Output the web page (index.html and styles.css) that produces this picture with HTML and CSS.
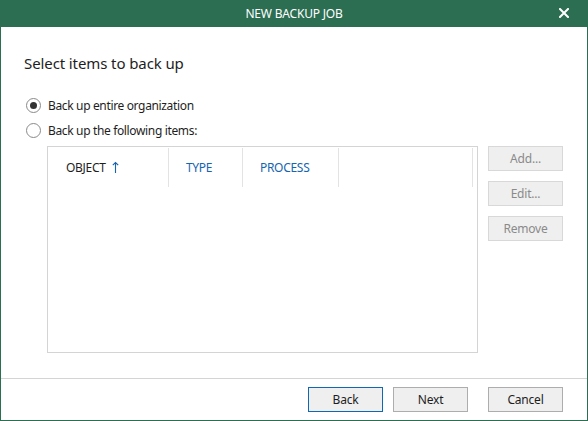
FILE: index.html
```html
<!DOCTYPE html>
<html>
<head>
<meta charset="utf-8">
<link rel="stylesheet" href="styles.css">
</head>
<body>
<div class="window">
  <div class="titlebar">
    <span class="title">NEW BACKUP JOB</span>
    <svg class="close" width="10" height="10" viewBox="0 0 10 10"><path d="M1 1L9 9M9 1L1 9" stroke="#fff" stroke-width="2" stroke-linecap="square"/></svg>
  </div>
  <div class="content">
    <h1 class="heading">Select items to back up</h1>
    <div class="radio-row">
      <span class="radio checked"></span><span class="radio-label">Back up entire organization</span>
    </div>
    <div class="radio-row">
      <span class="radio"></span><span class="radio-label">Back up the following items:</span>
    </div>
    <div class="items">
      <div class="table">
        <div class="thead">
          <div class="th col-object">OBJECT <svg class="sort" width="7" height="12" viewBox="0 0 7 12"><path d="M3.5 1.5V12M0.8 4.2L3.5 1.5L6.2 4.2" stroke="#1565b0" stroke-width="1.1" fill="none"/></svg></div>
          <div class="th col-type link">TYPE</div>
          <div class="th col-process link">PROCESS</div>
          <div class="th col-rest"></div>
        </div>
      </div>
      <div class="side-buttons">
        <button class="btn-disabled">Add...</button>
        <button class="btn-disabled">Edit...</button>
        <button class="btn-disabled">Remove</button>
      </div>
    </div>
  </div>
  <div class="footer">
    <button class="btn btn-default">Back</button>
    <button class="btn">Next</button>
    <button class="btn btn-cancel">Cancel</button>
  </div>
</div>
</body>
</html>
```
FILE: styles.css
```css
* { box-sizing: border-box; }
html, body { margin: 0; padding: 0; background: #fff; }
body { font-family: "Noto Sans", "Open Sans", sans-serif; color: #1e1e1e; }
.window {
  width: 588px; height: 421px;
  display: flex; flex-direction: column;
  border-left: 1px solid #2b6e51; border-right: 1px solid #2b6e51; border-bottom: 1px solid #2b6e51;
}
.titlebar {
  height: 27px; background: #2b6e51; margin: 0 -1px;
  display: flex; align-items: center; justify-content: center; position: relative;
}
.title { color: #fff; font-size: 12px; letter-spacing: -0.2px; }
.close { position: absolute; left: 559px; top: 8px; }
.content { flex: 1; padding: 26px 0 0 23px; }
.heading { margin: 0 0 20px 0; font-weight: normal; font-size: 15px; line-height: 20px; height: 20px; letter-spacing: -0.1px; color: #1e1e1e; }
.radio-row { display: flex; align-items: center; height: 25px; font-size: 12px; }
.radio {
  width: 15px; height: 15px; border-radius: 50%; border: 1px solid #8a8a8a; margin: 0 7px 0 2px;
  display: flex; align-items: center; justify-content: center; background: #fff;
}
.radio.checked::after { content: ""; width: 7px; height: 7px; border-radius: 50%; background: #333; }
.radio-label { letter-spacing: -0.35px; }
.items { display: flex; margin-top: 3px; padding-left: 23px; gap: 10px; }
.table { width: 431px; height: 207px; border: 1px solid #d4d4d4; padding-top: 1px; }
.thead { display: flex; height: 39px; }
.th { height: 39px; display: flex; align-items: center; font-size: 12px; border-right: 1px solid #e3e3e3; padding-left: 17px; letter-spacing: -0.3px; }
.col-object { width: 121px; padding-left: 18px; color: #1e1e1e; }
.col-type { width: 74px; }
.col-process { width: 96px; }
.col-rest { width: 134px; }
.link { color: #1565b0; }
.sort { margin-left: 6px; margin-top: -2px; }
.side-buttons { display: flex; flex-direction: column; gap: 10px; }
.side-buttons button {
  width: 75px; height: 25px; background: #efefef; border: 1px solid #d8d8d8; color: #8a8a8a;
  font-family: inherit; font-size: 12px; padding: 0; letter-spacing: -0.2px;
}
.footer {
  height: 42px; border-top: 1px solid #d4d4d4; display: flex; justify-content: flex-end; align-items: flex-start;
  padding: 8px 24px 0 0;
}
.btn {
  width: 75px; height: 25px; background: #efefef; border: 1px solid #adadad; color: #1e1e1e;
  font-family: inherit; font-size: 12px; padding: 0; margin-left: 10px; letter-spacing: -0.2px;
}
.btn-default { border-color: #1068b3; margin-left: 0; }
.btn-cancel { margin-left: 20px; }
```
